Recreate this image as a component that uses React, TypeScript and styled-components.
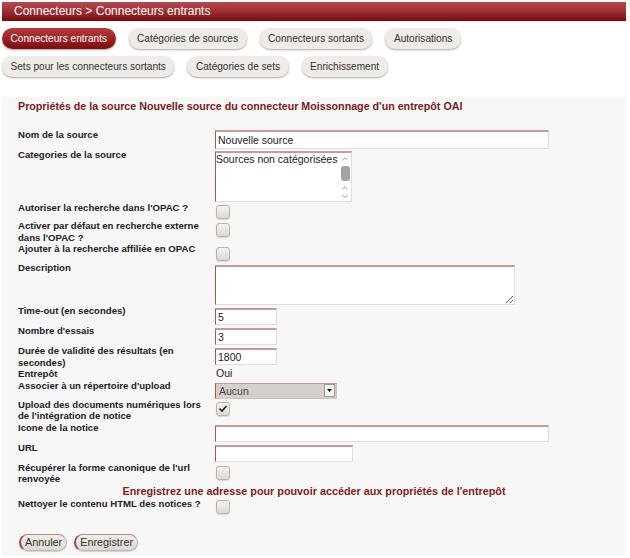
import React from 'react'
import styled, { createGlobalStyle, css } from 'styled-components'

const GlobalStyle = createGlobalStyle`
  body {
    margin: 2px;
    background: #fff;
    font-family: 'Liberation Sans', Arial, sans-serif;
    color: #222;
  }
`

const Page = styled.div`
  width: 624px;
`

const TitleBar = styled.div`
  height: 19px;
  line-height: 19px;
  padding-left: 12px;
  background: linear-gradient(#b24a4e, #a03236 45%, #7a0909);
  color: #fff;
  font-size: 12px;
`

const TabBar = styled.div`
  display: flex;
  flex-direction: column;
  gap: 7px;
  padding: 7px 0 20px;
`

const TabRow = styled.div`
  display: flex;
  gap: 13px;
`

const Tab = styled.div<{ active?: boolean }>`
  height: 21px;
  line-height: 21px;
  padding: 0 8.5px;
  border-radius: 11px;
  font-size: 10.1px;
  color: #333;
  background: #efebe6;
  box-shadow: 0 1px 2px rgba(0, 0, 0, 0.35);
  white-space: nowrap;
  ${({ active }) =>
    active &&
    css`
      background: linear-gradient(#b83c3f, #7d0b0d);
      color: #fff;
    `}
`

const Panel = styled.div`
  background: #f7f7f7;
  padding: 3px 16px 5px;
`

const Heading = styled.h3`
  margin: 0 0 16px;
  font-size: 10.7px;
  line-height: 13px;
  font-weight: bold;
  color: #7a1a1a;
`

const Row = styled.div`
  display: grid;
  grid-template-columns: 197px 1fr;
  align-items: start;
`

const Label = styled.div`
  width: 190px;
  font-size: 9.6px;
  line-height: 11.5px;
  font-weight: bold;
  color: #222;
`

const fieldBorder = css`
  box-sizing: border-box;
  background: #fff;
  border-style: solid;
  border-width: 2px 1px 1px 1px;
  border-color: #c79a9a #dedede #dedede #a35454;
`

const TextInput = styled.input<{ w: number; h?: number; top?: number }>`
  ${fieldBorder}
  display: block;
  width: ${({ w }) => w}px;
  height: ${({ h }) => h ?? 17}px;
  margin: ${({ top }) => top ?? 3}px 0 0;
  padding: 0 2px;
  font-family: 'Liberation Sans', Arial, sans-serif;
  font-size: 10.5px;
  color: #222;
  outline: none;
`

const TextArea = styled.textarea`
  ${fieldBorder}
  display: block;
  width: 300px;
  height: 40px;
  margin: 3px 0 0;
  padding: 1px 2px;
  font-family: 'Liberation Sans', Arial, sans-serif;
  font-size: 10.5px;
`

const ListBox = styled.div`
  ${fieldBorder}
  display: flex;
  width: 137px;
  height: 51px;
  margin-top: 2px;
`

const ListText = styled.div`
  flex: 1;
  font-size: 10.5px;
  line-height: 12px;
  white-space: nowrap;
  overflow: hidden;
`

const ScrollTrack = styled.div`
  width: 12px;
  display: flex;
  flex-direction: column;
  align-items: center;
  padding-top: 2px;
`

const Thumb = styled.div`
  width: 9px;
  height: 17px;
  margin: 3px 0 3px;
  border-radius: 3px;
  background: #a7a09e;
`

const Chevron = ({ up }: { up?: boolean }) => (
  <svg width="8" height="6" viewBox="0 0 8 6" style={{ margin: '1px 0 2px' }}>
    <polyline
      points={up ? '1,5 4,2 7,5' : '1,1 4,4 7,1'}
      fill="none"
      stroke="#8a8a8a"
      strokeWidth="1"
    />
  </svg>
)

const CheckBox = styled.span<{ top?: number }>`
  display: flex;
  align-items: center;
  justify-content: center;
  box-sizing: border-box;
  width: 14px;
  height: 14px;
  margin: ${({ top }) => top ?? 3}px 0 1px 1px;
  border: 1px solid #b7b3b0;
  border-radius: 3px;
  background: linear-gradient(#f4f2f0, #dcd8d4);
  box-shadow: 0 1px 1px rgba(0, 0, 0, 0.12);
`

const Check = ({ checked, top }: { checked?: boolean; top?: number }) => (
  <CheckBox top={top}>
    {checked && (
      <svg width="10" height="9" viewBox="0 0 10 9">
        <polyline points="1.5,4.5 4,7 8.5,2" fill="none" stroke="#222" strokeWidth="1.6" />
      </svg>
    )}
  </CheckBox>
)

const Dropdown = styled.div`
  box-sizing: border-box;
  display: flex;
  align-items: center;
  width: 122px;
  height: 16px;
  margin-top: 3px;
  background: #d5d0cc;
  border-style: solid;
  border-width: 1px;
  border-color: #c39898 #c8c4c0 #c8c4c0 #a35454;
`

const DropdownText = styled.span`
  flex: 1;
  padding-left: 3px;
  font-size: 10.5px;
  color: #444;
`

const DropdownArrow = styled.span`
  display: flex;
  align-items: center;
  justify-content: center;
  box-sizing: border-box;
  width: 11px;
  height: 13px;
  margin-right: 1px;
  background: #f2f2f2;
  border: 1px solid #999;
`

const Value = styled.div`
  font-size: 10.5px;
  line-height: 11px;
  padding-left: 1px;
  color: #222;
`

const Notice = styled.div`
  text-align: center;
  font-size: 10.8px;
  line-height: 13px;
  font-weight: bold;
  color: #841b1b;
`

const ButtonRow = styled.div`
  display: flex;
  gap: 7px;
  margin-top: 19px;
  padding-left: 1px;
`

const Button = styled.button`
  height: 17px;
  padding: 0 4px;
  border-radius: 9px;
  font-family: 'Liberation Sans', Arial, sans-serif;
  font-size: 10.8px;
  color: #333;
  background: linear-gradient(#f1ede9, #dcd8d4);
  border: 1px solid #bdb7b4;
  border-top-color: #b88888;
  border-left: 2px solid #9a4747;
  box-shadow: 0 1px 1px rgba(0, 0, 0, 0.15);
`

export default function App() {
  return (
    <Page>
      <GlobalStyle />
      <TitleBar>Connecteurs &gt; Connecteurs entrants</TitleBar>
      <TabBar>
        <TabRow>
          <Tab active>Connecteurs entrants</Tab>
          <Tab>Catégories de sources</Tab>
          <Tab>Connecteurs sortants</Tab>
          <Tab>Autorisations</Tab>
        </TabRow>
        <TabRow>
          <Tab>Sets pour les connecteurs sortants</Tab>
          <Tab>Catégories de sets</Tab>
          <Tab>Enrichissement</Tab>
        </TabRow>
      </TabBar>

      <Panel>
        <Heading>Propriétés de la source Nouvelle source du connecteur Moissonnage d'un entrepôt OAI</Heading>

        <Row>
          <Label>Nom de la source</Label>
          <TextInput w={334} h={19} top={1} defaultValue="Nouvelle source" />
        </Row>
        <Row>
          <Label>Categories de la source</Label>
          <ListBox>
            <ListText>Sources non catégorisées</ListText>
            <ScrollTrack>
              <Chevron up />
              <Thumb />
              <Chevron up />
              <Chevron />
            </ScrollTrack>
          </ListBox>
        </Row>
        <Row>
          <Label>Autoriser la recherche dans l'OPAC ?</Label>
          <Check />
        </Row>
        <Row>
          <Label>Activer par défaut en recherche externe dans l'OPAC ?</Label>
          <Check />
        </Row>
        <Row>
          <Label>Ajouter à la recherche affiliée en OPAC</Label>
          <Check top={4} />
        </Row>
        <Row>
          <Label>Description</Label>
          <TextArea />
        </Row>
        <Row>
          <Label>Time-out (en secondes)</Label>
          <TextInput w={62} defaultValue="5" />
        </Row>
        <Row>
          <Label>Nombre d'essais</Label>
          <TextInput w={62} defaultValue="3" />
        </Row>
        <Row>
          <Label>Durée de validité des résultats (en secondes)</Label>
          <TextInput w={62} defaultValue="1800" />
        </Row>
        <Row>
          <Label>Entrepôt</Label>
          <Value>Oui</Value>
        </Row>
        <Row>
          <Label>Associer à un répertoire d'upload</Label>
          <Dropdown>
            <DropdownText>Aucun</DropdownText>
            <DropdownArrow>
              <svg width="5" height="3" viewBox="0 0 5 3">
                <polygon points="0,0 5,0 2.5,3" fill="#111" />
              </svg>
            </DropdownArrow>
          </Dropdown>
        </Row>
        <Row>
          <Label>Upload des documents numériques lors de l'intégration de notice</Label>
          <Check checked />
        </Row>
        <Row>
          <Label>Icone de la notice</Label>
          <TextInput w={334} />
        </Row>
        <Row>
          <Label>URL</Label>
          <TextInput w={138} />
        </Row>
        <Row>
          <Label>Récupérer la forme canonique de l'url renvoyée</Label>
          <Check top={4} />
        </Row>
        <Notice>Enregistrez une adresse pour pouvoir accéder aux propriétés de l'entrepôt</Notice>
        <Row>
          <Label>Nettoyer le contenu HTML des notices ?</Label>
          <Check top={2} />
        </Row>

        <ButtonRow>
          <Button>Annuler</Button>
          <Button>Enregistrer</Button>
        </ButtonRow>
      </Panel>
    </Page>
  )
}
